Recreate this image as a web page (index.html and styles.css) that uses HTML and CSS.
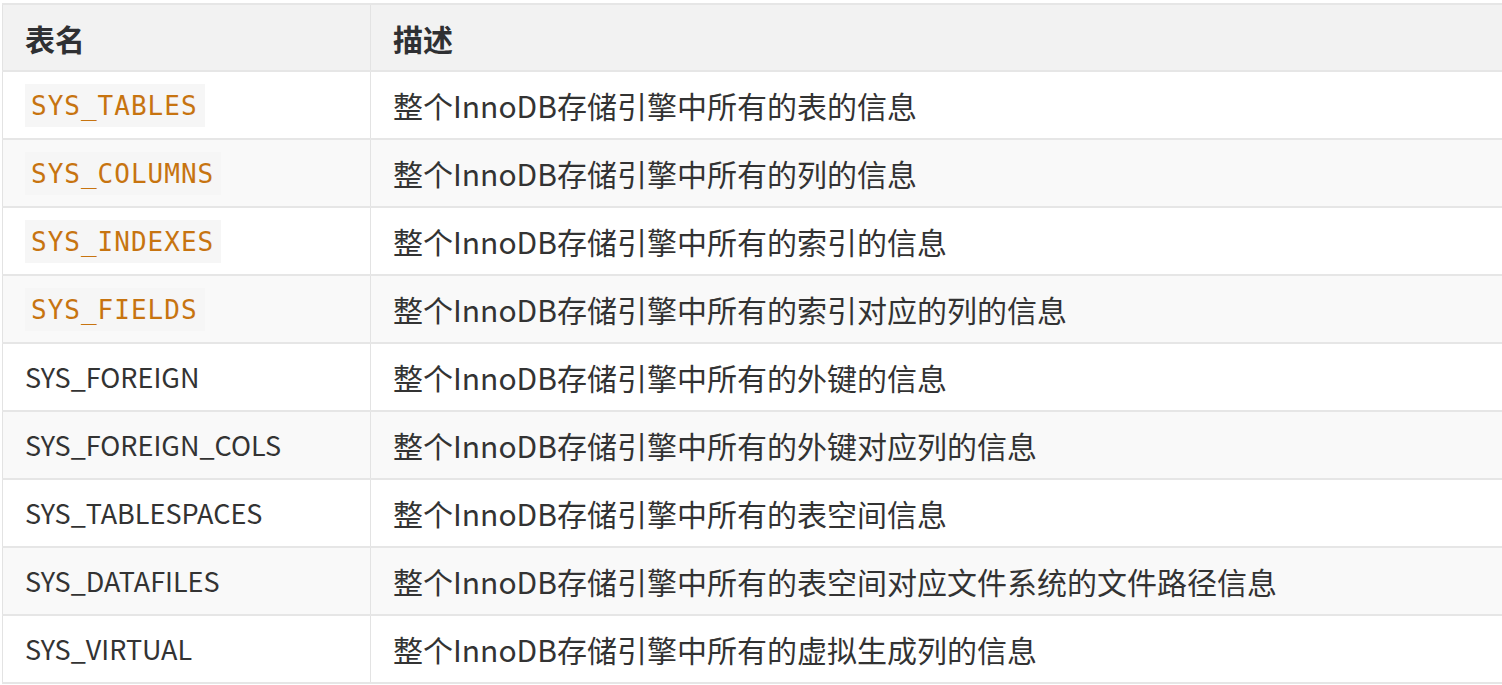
FILE: index.html
```html
<!DOCTYPE html>
<html lang="zh-CN">
<head>
<meta charset="utf-8">
<title>InnoDB 系统表</title>
<link rel="stylesheet" href="styles.css">
</head>
<body>
<table class="sys-table">
  <thead>
    <tr><th class="col-name">表名</th><th class="col-desc">描述</th></tr>
  </thead>
  <tbody>
    <tr><td class="name"><code class="code">SYS_TABLES</code></td><td>整个InnoDB存储引擎中所有的表的信息</td></tr>
    <tr><td class="name"><code class="code">SYS_COLUMNS</code></td><td>整个InnoDB存储引擎中所有的列的信息</td></tr>
    <tr><td class="name"><code class="code">SYS_INDEXES</code></td><td>整个InnoDB存储引擎中所有的索引的信息</td></tr>
    <tr><td class="name"><code class="code">SYS_FIELDS</code></td><td>整个InnoDB存储引擎中所有的索引对应的列的信息</td></tr>
    <tr><td class="name">SYS_FOREIGN</td><td>整个InnoDB存储引擎中所有的外键的信息</td></tr>
    <tr><td class="name">SYS_FOREIGN_COLS</td><td>整个InnoDB存储引擎中所有的外键对应列的信息</td></tr>
    <tr><td class="name">SYS_TABLESPACES</td><td>整个InnoDB存储引擎中所有的表空间信息</td></tr>
    <tr><td class="name">SYS_DATAFILES</td><td>整个InnoDB存储引擎中所有的表空间对应文件系统的文件路径信息</td></tr>
    <tr><td class="name">SYS_VIRTUAL</td><td>整个InnoDB存储引擎中所有的虚拟生成列的信息</td></tr>
  </tbody>
</table>
</body>
</html>
```
FILE: styles.css
```css
html, body {
  margin: 0;
  padding: 0;
  background: #ffffff;
  overflow: hidden;
}
body {
  padding: 3px 0 0 2px;
  font-family: "Noto Sans CJK SC", "Noto Sans", sans-serif;
  color: #333333;
}
.sys-table {
  border-collapse: collapse;
  width: 1540px;
  font-size: 30px;
}
.sys-table th,
.sys-table td {
  border-top: 2px solid #e6e6e6;
  border-bottom: 2px solid #e6e6e6;
  border-left: 1px solid #e3e3e3;
  border-right: 1px solid #e3e3e3;
  padding: 11px 22px;
  height: 44px;
  line-height: 44px;
  text-align: left;
  vertical-align: middle;
  white-space: nowrap;
}
.sys-table th {
  background: #f2f2f2;
  font-weight: 700;
  color: #2f3033;
  padding-top: 11px;
  padding-bottom: 10px;
}
.col-name {
  width: 323px;
}
.name {
  font-size: 27px;
}
.sys-table tbody tr:nth-child(even) td {
  background: #f9f9f9;
}
.code {
  display: inline-block;
  font-family: "DejaVu Sans Mono", monospace;
  font-size: 26px;
  letter-spacing: 1px;
  color: #c77410;
  background: #f6f6f6;
  margin-top: 1px;
  padding: 3px 7px 1px 6px;
  line-height: 39px;
  vertical-align: top;
}
```
